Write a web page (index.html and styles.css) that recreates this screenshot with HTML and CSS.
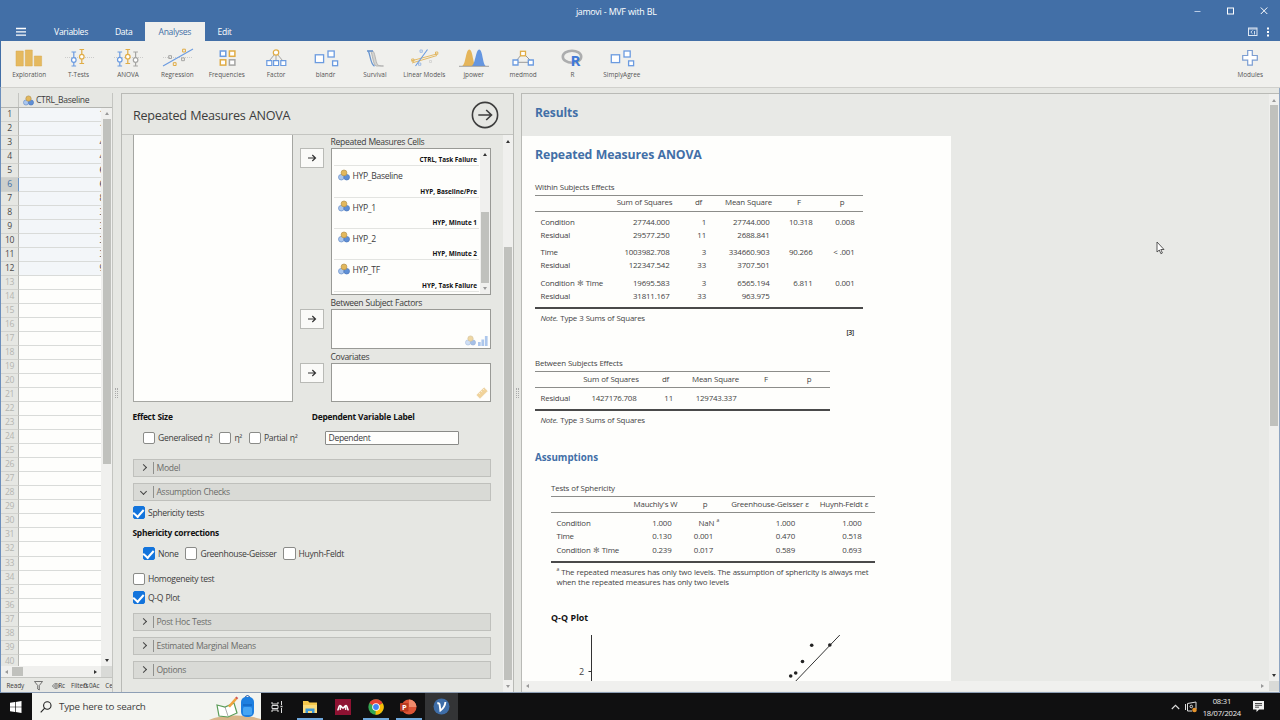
FILE: index.html
```html
<!DOCTYPE html>
<html lang="en">
  <head>
    <meta charset="UTF-8" />
    <meta name="viewport" content="width=device-width, initial-scale=1.0" />
    <title>jamovi - MVF with BL</title>
    <link rel="stylesheet" href="styles.css">
  </head>
  <body>
    <!-- shared icons -->
    <svg class="defs" width="0" height="0">
      <symbol id="nominal" viewBox="0 0 12 12">
        <circle cx="3.3" cy="8.2" r="2.8" fill="#a9c6ee" stroke="#6a8fc8" stroke-width=".7" />
        <circle cx="8.7" cy="8.2" r="2.8" fill="#5f8fd6" stroke="#4d79ba" stroke-width=".7" />
        <circle cx="6" cy="3.9" r="2.9" fill="#e3b85c" stroke="#b3924f" stroke-width=".7" />
      </symbol>
      <symbol id="arrow" viewBox="0 0 10 10">
        <path d="M1 5h7.5M5.3 2l3.2 3-3.2 3" fill="none" stroke="#333" stroke-width="1.2" />
      </symbol>
      <symbol id="squares" viewBox="0 0 34 22">
        <g fill="#fff" stroke="#6b9be0" stroke-width="1.3">
          <rect x="6.3" y="7.8" width="8.3" height="7.8" />
          <rect x="19" y="4" width="6.2" height="6" />
          <rect x="23.6" y="13.9" width="5" height="4.8" />
        </g>
      </symbol>
    </svg>

    <header class="titlebar">
      <div class="caption">
        <span>jamovi - MVF with BL</span>
        <svg class="win-buttons" width="90" height="22" fill="none" stroke="#fff">
          <path d="M14.5 11.5h6" stroke="#b9cbe4" />
          <rect x="47.5" y="8" width="6" height="6" />
          <path d="M80.8 7.5l6.5 6.5M87.3 7.5l-6.5 6.5" />
        </svg>
      </div>
      <nav class="tabs">
        <svg class="burger" width="10" height="10"><path d="M0 1.5h10M0 4.8h10M0 8.1h10" stroke="#fff" stroke-width="1.3" /></svg>
        <a class="tab tab-variables">Variables</a>
        <a class="tab tab-data">Data</a>
        <a class="tab tab-analyses active">Analyses</a>
        <a class="tab tab-edit">Edit</a>
        <svg class="tab-tools" width="26" height="12" fill="none" stroke="#dfe8f4">
          <rect x="1.5" y="2" width="8.5" height="7.5" />
          <path d="M1.5 3h8.5M5.5 4.5l-1.7 1.6 1.7 1.6M7.5 5v3.5" stroke-width=".9" />
          <path d="M21 1.5v9.5" stroke="#fff" stroke-width="2" stroke-dasharray="2 1.5" />
        </svg>
      </nav>
    </header>

    <div class="ribbon">
      <div class="tool">
        <svg viewBox="0 0 34 22"><path d="M4 4h7.3v15H4zM13.3 3h7v16h-7zM22.3 9h7.3v10h-7.3z" fill="#e5b95f" stroke="#d8a84c" stroke-width=".5" /></svg>
        <span>Exploration</span>
      </div>
      <div class="tool">
        <svg viewBox="0 0 34 22" fill="none">
          <path d="M3 10.5h29" stroke="#bbb" stroke-dasharray="1 1" stroke-width=".7" />
          <g stroke="#6b9be0" stroke-width="1.2"><path d="M11.8 5v14M9.5 5h4.6M9.5 19h4.6" /><circle cx="11.8" cy="13" r="2.3" fill="#fff" /></g>
          <g stroke="#e0ac45" stroke-width="1.2"><path d="M19.8 2.5v14M17.5 2.5h4.6M17.5 16.5h4.6" /><circle cx="19.8" cy="9.7" r="2.3" fill="#fff" /></g>
        </svg>
        <span>T-Tests</span>
      </div>
      <div class="tool">
        <svg viewBox="0 0 34 22" fill="none">
          <path d="M3 10.5h30" stroke="#bbb" stroke-dasharray="1 1" stroke-width=".7" />
          <g stroke="#6b9be0" stroke-width="1.2"><path d="M8.8 5v14M6.5 5h4.6M6.5 19h4.6" /><circle cx="8.8" cy="12.7" r="2.3" fill="#fff" /></g>
          <g stroke="#e0ac45" stroke-width="1.2"><path d="M16.8 2.5v14M14.5 2.5h4.6M14.5 16.5h4.6" /><circle cx="16.8" cy="9.7" r="2.3" fill="#fff" /></g>
          <g stroke="#a5a5a3" stroke-width="1.2"><path d="M24.6 5v14M22.3 5h4.6M22.3 19h4.6" /><circle cx="24.6" cy="13" r="2.3" fill="#fff" /></g>
        </svg>
        <span>ANOVA</span>
      </div>
      <div class="tool">
        <svg viewBox="0 0 34 22" fill="none">
          <path d="M3 10.5h30" stroke="#bbb" stroke-dasharray="1 1" stroke-width=".7" />
          <path d="M3 19L33 2" stroke="#6b9be0" stroke-width="1.1" />
          <path d="M8.7 8.7h2.8v2.8H8.7zM21.6 10.9h2.8v2.8h-2.8z" stroke="#a5a5a3" />
          <path d="M13.3 15.7h2.8v2.8h-2.8zM22.6 2.2h2.8V5h-2.8z" stroke="#e0ac45" />
        </svg>
        <span>Regression</span>
      </div>
      <div class="tool">
        <svg viewBox="0 0 34 22" fill="#fff" stroke-width="1.5">
          <rect x="10.3" y="4" width="5.5" height="5.3" stroke="#6b9be0" />
          <rect x="19.4" y="4" width="5.5" height="5.3" stroke="#e0ac45" />
          <rect x="10.3" y="12.8" width="5.5" height="5.3" stroke="#e0ac45" />
          <rect x="19.4" y="12.8" width="5.5" height="5.3" stroke="#a5a5a3" />
        </svg>
        <span>Frequencies</span>
      </div>
      <div class="tool">
        <svg viewBox="0 0 34 22" fill="#fff">
          <path d="M15.5 7.5l-5 6M17 8v6M18.5 7.5l5 6" stroke="#a5a5a3" />
          <circle cx="17" cy="5.5" r="2.7" stroke="#e0ac45" stroke-width="1.2" />
          <path d="M7.8 13.7h5v4.8h-5zM14.6 13.7h5v4.8h-5zM21.8 13.7h5v4.8h-5z" stroke="#6b9be0" stroke-width="1.2" />
        </svg>
        <span>Factor</span>
      </div>
      <div class="tool">
        <svg><use href="#squares" /></svg>
        <span>blandr</span>
      </div>
      <div class="tool">
        <svg viewBox="0 0 34 22" fill="none">
          <path d="M9.5 4h5c2.5 0 3 11 5 13.5 1 1.2 3 1.5 6 1.5h-7c-3.5 0-4-13-6-15" fill="#d3d3d0" stroke="#aaa" stroke-width=".8" />
          <path d="M9 4h6M10.5 4.5c1.5 2 2 13.5 6 14.5" stroke="#6794cf" stroke-width="1.3" />
        </svg>
        <span>Survival</span>
      </div>
      <div class="tool">
        <svg viewBox="0 0 34 22" fill="none">
          <path d="M5 13.7l25-6.8M5 16l25-7.5" stroke="#e0ac45" stroke-width=".8" />
          <path d="M20.5 2.5l-12 16.5" stroke="#6b9be0" stroke-width="1.1" />
          <path d="M13 3h2.3v2.3H13zM11.5 16h2.3v2.3h-2.3z" stroke="#8db1e4" stroke-width=".8" />
          <path d="M4.7 12h2.3v2.3H4.7zM28.5 5h2.3v2.3h-2.3z" stroke="#e0ac45" stroke-width=".8" />
          <path d="M22.5 13.5h2v2h-2z" stroke="#ccc" stroke-width=".7" />
        </svg>
        <span>Linear Models</span>
      </div>
      <div class="tool">
        <svg viewBox="0 0 34 22">
          <path d="M5 19c4-1 3.5-16.5 7.3-16.5S15.8 18 19 19z" fill="#e5b55a" />
          <path d="M14.5 19c4-1 4-16.5 7.7-16.5S25.5 18 29 19z" fill="#6596e0" />
          <path d="M2 19.3h30" stroke="#8c8c8c" stroke-width=".8" />
        </svg>
        <span>jpower</span>
      </div>
      <div class="tool">
        <svg viewBox="0 0 34 22" fill="#fff">
          <path d="M15.5 7.5l-5 6M18.5 7.5l6 6M10 15.3h14" stroke="#999" />
          <rect x="14.5" y="4.3" width="5" height="4.5" stroke="#e0ac45" stroke-width="1.3" />
          <path d="M7 13h5v5H7zM22.3 13h5v5h-5z" stroke="#6b9be0" stroke-width="1.3" />
        </svg>
        <span>medmod</span>
      </div>
      <div class="tool">
        <svg viewBox="0 0 34 22">
          <ellipse cx="17" cy="9.7" rx="9.2" ry="6" fill="none" stroke="#acadae" stroke-width="2.6" />
          <text x="15.5" y="19" class="r-letter">R</text>
        </svg>
        <span>R</span>
      </div>
      <div class="tool">
        <svg><use href="#squares" /></svg>
        <span>SimplyAgree</span>
      </div>
      <div class="tool modules">
        <svg viewBox="0 0 34 22"><path d="M14.7 3.5h4.6v5h5v4.6h-5v5h-4.6v-5h-5V8.5h5z" fill="#fff" stroke="#7b9dd2" stroke-width="1.2" /></svg>
        <span>Modules</span>
      </div>
    </div>

    <main class="workspace">
      <section class="data-view">
        <div class="column-head">
          <svg class="var-icon"><use href="#nominal" /></svg>
          <span>CTRL_Baseline</span>
        </div>
        <div class="grid-area">
          <div class="grid" id="grid"></div>
          <div class="vscroll">
            <i class="up"></i><b class="thumb"></b><i class="down dark"></i>
          </div>
        </div>
        <div class="hscroll">
          <i class="left"></i><b class="thumb"></b><i class="right dark"></i><span class="corner"></span>
        </div>
        <div class="status">
          <span class="ready">Ready</span>
          <svg class="funnel" width="9" height="10"><path d="M.5.5h8L5.3 4.5V9l-1.6-1V4.5z" fill="none" stroke="#555" stroke-width=".8" /></svg>
          <svg class="eye" width="8" height="8" fill="none" stroke="#666" stroke-width=".8"><path d="M.5 4c2-3.3 5-3.3 7 0-2 3.3-5 3.3-7 0z" /><circle cx="4" cy="4" r="1.3" /></svg>
          <span class="s-rows">Rc</span>
          <span class="s-filters">Filters</span><span class="s-added">0 0Ac</span><span class="s-cells">Ce</span>
        </div>
      </section>

      <div class="splitter"><i></i></div>

      <section class="options">
        <div class="options-head">
          <h2>Repeated Measures ANOVA</h2>
          <svg class="hide-btn" width="28" height="28" fill="none" stroke="#3d3d3d" stroke-width="1.6">
            <circle cx="14" cy="14" r="12.6" /><path d="M7.3 14h13M15.2 9l5.3 5-5.3 5" />
          </svg>
        </div>
        <div class="options-main">
          <div class="options-body">
            <div class="var-select">
              <div class="supplier"></div>
              <div class="buttons">
                <button class="move"><svg><use href="#arrow" /></svg></button>
                <button class="move"><svg><use href="#arrow" /></svg></button>
                <button class="move"><svg><use href="#arrow" /></svg></button>
              </div>
              <div class="targets">
                <label>Repeated Measures Cells</label>
                <div class="target cells">
                  <div class="cell-list">
                    <div class="cell first"><em>CTRL, Task Failure</em></div>
                    <div class="cell"><span><svg class="var-icon"><use href="#nominal" /></svg>HYP_Baseline</span><em>HYP, Baseline/Pre</em></div>
                    <div class="cell"><span><svg class="var-icon"><use href="#nominal" /></svg>HYP_1</span><em>HYP, Minute 1</em></div>
                    <div class="cell"><span><svg class="var-icon"><use href="#nominal" /></svg>HYP_2</span><em>HYP, Minute 2</em></div>
                    <div class="cell"><span><svg class="var-icon"><use href="#nominal" /></svg>HYP_TF</span><em>HYP, Task Failure</em></div>
                  </div>
                  <div class="vscroll"><i class="up dark"></i><b class="thumb"></b><i class="down"></i></div>
                </div>
                <label>Between Subject Factors</label>
                <div class="target small">
                  <svg class="var-icon"><use href="#nominal" /></svg>
                  <svg class="ordinal" width="10" height="10"><path d="M0 6h2.7v4H0zM3.4 3.5h2.7V10H3.4zM6.9 0h2.7v10H6.9z" fill="#6b9be0" /></svg>
                </div>
                <label>Covariates</label>
                <div class="target small">
                  <svg width="12" height="12"><path d="M.8 8L8 .8 11.3 4 4 11.3z" fill="#e8b04a" stroke="#d5a548" stroke-width=".6" /><path d="M3 6l1.2 1.2M5 4l1.2 1.2M7 2l1.2 1.2" stroke="#fff" stroke-width=".6" /></svg>
                </div>
              </div>
            </div>

            <div class="two-cols">
              <h4>Effect Size</h4>
              <h4>Dependent Variable Label</h4>
            </div>
            <div class="effect-row">
              <span class="check"><i></i>Generalised η²</span>
              <span class="check"><i></i>η²</span>
              <span class="check"><i></i>Partial η²</span>
              <span class="text-input">Dependent</span>
            </div>

            <div class="collapse"><b class="chev"></b><span>Model</span></div>
            <div class="collapse open"><b class="chev"></b><span>Assumption Checks</span></div>
            <div class="check-row"><span class="check on"><i></i>Sphericity tests</span></div>
            <h4 class="corrections">Sphericity corrections</h4>
            <div class="check-row indent">
              <span class="check on"><i></i>None</span>
              <span class="check"><i></i>Greenhouse-Geisser</span>
              <span class="check"><i></i>Huynh-Feldt</span>
            </div>
            <div class="check-row homogeneity"><span class="check"><i></i>Homogeneity test</span></div>
            <div class="check-row qq"><span class="check on"><i></i>Q-Q Plot</span></div>
            <div class="collapse"><b class="chev"></b><span>Post Hoc Tests</span></div>
            <div class="collapse"><b class="chev"></b><span>Estimated Marginal Means</span></div>
            <div class="collapse"><b class="chev"></b><span>Options</span></div>
          </div>
          <div class="vscroll"><i class="up dark"></i><b class="thumb"></b><i class="down"></i></div>
        </div>
      </section>

      <div class="splitter"><i></i></div>

      <section class="results">
        <div class="results-main">
          <div class="results-scroll">
            <h1>Results</h1>
            <article class="page">
              <h2>Repeated Measures ANOVA</h2>

              <table class="within">
                <caption>Within Subjects Effects</caption>
                <colgroup><col style="width:77px"><col style="width:65px"><col style="width:43px"><col style="width:57px"><col style="width:44px"><col style="width:42px"></colgroup>
                <thead><tr><th></th><th>Sum of Squares</th><th>df</th><th>Mean Square</th><th>F</th><th>p</th></tr></thead>
                <tbody>
                  <tr class="start"><td>Condition</td><td>27744.000</td><td>1</td><td>27744.000</td><td>10.318</td><td>0.008</td></tr>
                  <tr><td>Residual</td><td>29577.250</td><td>11</td><td>2688.841</td><td></td><td></td></tr>
                  <tr class="group"><td>Time</td><td>1003982.708</td><td>3</td><td>334660.903</td><td>90.266</td><td>&lt; .001</td></tr>
                  <tr><td>Residual</td><td>122347.542</td><td>33</td><td>3707.501</td><td></td><td></td></tr>
                  <tr class="group"><td>Condition <span class="by">✻</span> Time</td><td>19695.583</td><td>3</td><td>6565.194</td><td>6.811</td><td>0.001</td></tr>
                  <tr class="end"><td>Residual</td><td>31811.167</td><td>33</td><td>963.975</td><td></td><td></td></tr>
                </tbody>
              </table>
              <p class="note"><i>Note.</i> Type 3 Sums of Squares</p>
              <p class="ref">[3]</p>

              <table class="between">
                <caption>Between Subjects Effects</caption>
                <colgroup><col style="width:43px"><col style="width:66px"><col style="width:43px"><col style="width:57px"><col style="width:44px"><col style="width:42px"></colgroup>
                <thead><tr><th></th><th>Sum of Squares</th><th>df</th><th>Mean Square</th><th>F</th><th>p</th></tr></thead>
                <tbody>
                  <tr class="start end"><td>Residual</td><td>1427176.708</td><td>11</td><td>129743.337</td><td></td><td></td></tr>
                </tbody>
              </table>
              <p class="note"><i>Note.</i> Type 3 Sums of Squares</p>

              <h3>Assumptions</h3>

              <table class="sphericity">
                <caption>Tests of Sphericity</caption>
                <colgroup><col style="width:77px"><col style="width:55px"><col style="width:44px"><col style="width:86px"><col style="width:62px"></colgroup>
                <thead><tr><th></th><th>Mauchly's W</th><th>p</th><th>Greenhouse-Geisser ε</th><th>Huynh-Feldt ε</th></tr></thead>
                <tbody>
                  <tr class="start"><td>Condition</td><td>1.000</td><td class="nan">NaN <sup>a</sup></td><td>1.000</td><td>1.000</td></tr>
                  <tr><td>Time</td><td>0.130</td><td>0.001</td><td>0.470</td><td>0.518</td></tr>
                  <tr class="end"><td>Condition <span class="by">✻</span> Time</td><td>0.239</td><td>0.017</td><td>0.589</td><td>0.693</td></tr>
                </tbody>
              </table>
              <p class="footnote"><sup>a</sup> The repeated measures has only two levels. The assumption of sphericity is always met<br>when the repeated measures has only two levels</p>

              <h4>Q-Q Plot</h4>
              <svg class="plot" width="400" height="50" viewBox="13 0 400 50">
                <path d="M69.5 0v50M66.5 36.5h3" stroke="#333" />
                <text x="62" y="39.5">2</text>
                <path d="M317.8 0L270 50" stroke="#333" />
                <g fill="#222">
                  <circle cx="307.8" cy="10" r="1.8" /><circle cx="289.7" cy="10.3" r="1.8" />
                  <circle cx="280.5" cy="26.5" r="1.8" /><circle cx="273.7" cy="38" r="1.8" /><circle cx="268.7" cy="41" r="1.8" />
                </g>
              </svg>
            </article>
          </div>
          <div class="vscroll"><i class="up"></i><b class="thumb"></b><i class="down dark"></i></div>
        </div>
        <div class="hscroll"><i class="left"></i><i class="right"></i><span class="corner"></span></div>
      </section>
    </main>

    <footer class="taskbar">
      <div class="start-btn"><svg width="12" height="12" fill="#fff"><path d="M0 1.7l5-.7v4.7H0zM5.7.9l5.8-.8v5.6H5.7zM0 6.3h5V11l-5-.7zM5.7 6.3h5.8v5.6l-5.8-.8z" /></svg></div>
      <div class="search">
        <svg width="12" height="12" fill="none" stroke="#222" stroke-width="1.1"><circle cx="7.3" cy="4.5" r="3.7" /><path d="M4.7 7.2L.7 11.3" /></svg>
        <span>Type here to search</span>
        <svg class="doodle" width="54" height="26">
          <path d="M0 26c12-6 42-6 54 0z" fill="#d9b58a" />
          <path d="M8 11l8 2 9-4 3 10-9 4-9-1z" fill="#fff" stroke="#5a9c57" stroke-width="1.2" />
          <path d="M16 13l3 9" stroke="#888" stroke-width=".7" />
          <path d="M19 12l7-8 2 1.5-7 8z" fill="#f0a33c" /><path d="M26 4l1.3-1.5 2 1.5-1.3 1.5z" fill="#d3574e" />
          <path d="M36 5q0-3.5 2.5-3.5T41 5" fill="none" stroke="#1650a6" />
          <rect x="32" y="3" width="13" height="20" rx="5" fill="#1d7fe0" /><rect x="34" y="13" width="9" height="8" rx="1.5" fill="#46a5f4" /><path d="M34 11h9" stroke="#0d5ab5" />
        </svg>
      </div>
      <div class="task"><svg width="12" height="12" fill="none" stroke="#ddd"><path d="M1 1v2h6V1M1 11V9h6v2M1 4.5h6v3H1zM10.5 0v4M10.5 7v5" /><path d="M9.5 5.5h2" stroke-width="1.5" /></svg></div>
      <div class="task running"><svg width="16" height="14"><path d="M1 1h5l1.5 1.5H15V13H1z" fill="#f5c84c" /><path d="M1 5h14v8H1z" fill="#fbdc7b" /><path d="M3.5 13V8.5h9V13h-2.5v-2H6v2z" fill="#3f9ad8" /></svg></div>
      <div class="task"><svg width="16" height="16"><rect width="16" height="16" fill="#8e1232" /><path d="M2.500 11.300c1.300-.8.8-4.300 2.500-4.800 1.500 0 1.500 2.500 3 2.500s1.500-2.500 3-2.500c1.700.5 1.200 4 2.500 4.800" fill="none" stroke="#fff" stroke-width="1.600" /><path d="M5.300 7v4M10.700 7v4" stroke="#fff" stroke-width="1.200" /></svg></div>
      <div class="task running"><svg width="16" height="16"><circle cx="8" cy="8" r="7.7" fill="#33a852" /><path d="M8 8L1.3 4.2A7.7 7.7 0 0 1 14.7 4.2z" fill="#e94235" /><path d="M8 8l6.7-3.8A7.7 7.7 0 0 1 7.5 15.7z" fill="#fbbc05" /><circle cx="8" cy="8" r="3.8" fill="#fff" /><circle cx="8" cy="8" r="2.9" fill="#4285f4" /></svg></div>
      <div class="task running"><svg width="17" height="16"><circle cx="9" cy="8" r="7.5" fill="#dc5436" /><path d="M9 .5A7.5 7.5 0 0 1 16.5 8H9z" fill="#f08b6c" /><rect y="4" width="8.5" height="8.5" rx=".8" fill="#b93a20" /><text x="2" y="11" class="pp">P</text></svg></div>
      <div class="task active"><svg width="17" height="17"><circle cx="8.5" cy="8.5" r="8" fill="#3e6da8" /><path d="M4.3 5.5q2-.8 2.3 1l.8 6q4.5-3 5-8.5" fill="none" stroke="#fff" stroke-width="1.9" /></svg></div>
      <div class="tray">
        <svg width="9" height="6"><path d="M.8 5l3.700-3.700L8.200 5" fill="none" stroke="#ddd" stroke-width="1.1" /></svg>
        <svg class="meet" width="13" height="12" fill="none" stroke="#ddd"><path d="M2.5 2.5L11 1v7M2.5 2.5v7.5H7M.5 3v6" /><circle cx="6.3" cy="5.5" r="1.3" /><circle cx="9.5" cy="9" r="2.3" fill="#e8952c" stroke="none" /></svg>
        <div class="clock">08:31<br>18/07/2024</div>
        <svg width="13" height="13"><path d="M1 1h11v8.5H7L4.5 12V9.5H1z" fill="#f0f0f0" /><path d="M3 3.5h7M3 5.3h7M3 7.2h4" stroke="#222" stroke-width=".8" /></svg>
      </div>
    </footer>

    <svg class="cursor" width="9" height="14"><path d="M1 1v10l2.3-2 1.6 3.7 1.5-.7-1.6-3.5H8z" fill="#fff" stroke="#333" stroke-width=".8" /></svg>

    <script>
      // 12 filled rows, the rest are empty
      const digits = ["1", "1", "4", "4", "6", "6", "8", "3", "3", "3", "3", "9"];
      const grid = document.getElementById('grid');
      for (let i = 1; i <= 40; i++) {
        const row = document.createElement('div');
        row.className = 'row' + (i <= 12 ? ' filled' : '') + (i === 6 ? ' selected' : '');
        row.innerHTML = `<span class="num">${i}</span><span class="value"></span>`;
        if (i <= 12) row.lastChild.innerHTML = `<u>${digits[i - 1]}</u>`;
        grid.appendChild(row);
      }
    </script>
  </body>
</html>
```

FILE: styles.css
```css
* {
  box-sizing: border-box;
}
body {
  margin: 0;
  width: 1280px;
  height: 720px;
  overflow: hidden;
  display: flex;
  flex-direction: column;
  font-family: "Open Sans", "Noto Sans", sans-serif;
  font-size: 8.6px;
  letter-spacing: -.32px;
  word-spacing: .4px;
  line-height: 12px;
  color: #3c3c3c;
  background-color: #e6e7e3;
}
h1, h2, h3, h4, p {
  margin: 0;
}
svg {
  display: block;
  flex: none;
}
.defs {
  position: absolute;
}

/* title bar */
.titlebar {
  height: 41px;
  flex: none;
  background-color: #426fa7;
  color: #fff;
}
.caption {
  height: 22px;
  display: flex;
  justify-content: flex-end;
  align-items: center;
}
.caption span {
  font-size: 8.9px;
  margin-right: 523.5px;
  white-space: nowrap;
  padding-top: 1px;
}
.win-buttons {
  margin-right: 10px;
}
.tabs {
  display: flex;
  height: 19px;
  align-items: center;
}
.burger {
  margin: 0 14px 0 15.5px;
}
.tab {
  height: 19px;
  line-height: 20px;
  text-align: center;
}
.tab-variables {
  width: 63px;
}
.tab-data {
  width: 42.5px;
}
.tab-analyses {
  width: 59.5px;
}
.tab-edit {
  width: 40px;
}
.tab.active {
  background-color: #f0f0ed;
  color: #426fa7;
}
.tab-tools {
  margin-left: auto;
  margin-right: 7px;
}

/* ribbon */
.ribbon {
  height: 47px;
  flex: none;
  display: flex;
  padding-left: 3.5px;
  background-color: #f0f0ed;
  border-bottom: 1px solid #d0d0cc;
  border-left: 1px solid #426fa7;
}
.tool {
  width: 49.4px;
  padding-top: 6px;
  display: flex;
  flex-direction: column;
  align-items: center;
  font-size: 6.4px;
  letter-spacing: 0;
  word-spacing: 0;
  line-height: 11px;
  white-space: nowrap;
  color: #555;
}
.tool svg {
  width: 34px;
  height: 22px;
}
.modules {
  margin-left: auto;
  margin-right: 5px;
}
.r-letter {
  font: bold 15px "Open Sans", sans-serif;
  fill: #3f79d8;
}

/* scroll bars */
.vscroll {
  display: flex;
  flex-direction: column;
  align-items: center;
  background-color: #f0f0ee;
  flex: none;
}
.thumb {
  background-color: #c0c1bd;
}
.up, .down, .left, .right {
  border: 2.5px solid transparent;
  flex: none;
  width: 0;
  height: 0;
}
.up {
  border-top: 0;
  border-bottom: 3px solid #999;
}
.down {
  border-bottom: 0;
  border-top: 3px solid #999;
  margin-top: auto;
}
.left {
  border-left: 0;
  border-right: 3px solid #999;
}
.right {
  border-right: 0;
  border-left: 3px solid #999;
  margin-left: auto;
}
.up.dark {
  border-bottom-color: #333;
}
.down.dark {
  border-top-color: #333;
}
.right.dark {
  border-left-color: #333;
}
.hscroll {
  display: flex;
  align-items: center;
  background-color: #f0f0ee;
  flex: none;
}
.corner {
  height: 100%;
  background-color: #d9dad7;
}

.workspace {
  height: 605px;
  flex: none;
  display: flex;
  padding-top: 5px;
  border-left: 1px solid #6c8fbc;
  border-bottom: 1px solid #8e9fb5;
  border-right: 1px solid #8fa5c2;
}

/* spreadsheet */
.data-view {
  width: 112px;
  flex: none;
  display: flex;
  flex-direction: column;
  border-right: 1px solid #c4c5c1;
}
.column-head {
  height: 14px;
  margin-left: 17px;
  padding-left: 4px;
  border-left: 1px solid #c4c5c1;
  display: flex;
  align-items: center;
  gap: 2px;
}
.var-icon {
  width: 11px;
  height: 11px;
}
.grid-area {
  display: flex;
  height: 559px;
  border-top: 1px solid #b5b6b2;
}
.grid {
  width: 100px;
  overflow: hidden;
}
.row {
  display: flex;
  height: 14.03px;
}
.num {
  width: 18px;
  flex: none;
  text-align: center;
  line-height: 13px;
  color: #b4b5b1;
  border-right: 1px solid #b5b6b2;
  border-bottom: 1px solid #d2d3cf;
}
.value {
  flex: 1;
  background-color: #fefefc;
  border-bottom: 1px solid #d9dbd9;
  overflow: hidden;
}
.value u {
  float: right;
  margin-right: -3px;
  text-decoration: none;
}
.filled .num {
  color: #4a4a4a;
}
.filled .value {
  background-color: #f3f6f9;
}
.selected .num {
  background-color: #cdcfcc;
  color: #426fa7;
  border-right: 1.5px solid #6c93c4;
}
.data-view .vscroll {
  width: 11px;
  padding: 4px 0 4px;
}
.data-view .vscroll .thumb {
  width: 8px;
  height: 345px;
  margin-top: 4px;
}
.data-view .hscroll {
  height: 11px;
  padding-left: 4px;
}
.data-view .hscroll .thumb {
  width: 11px;
  height: 9px;
  margin-left: 4px;
}
.data-view .corner {
  width: 11px;
  margin-left: 4px;
}
.status {
  flex: 1;
  border-top: 1px solid #c4c5c1;
  display: flex;
  align-items: center;
  font-size: 6.4px;
  letter-spacing: -.1px;
  padding: 1px 0 0 5.5px;
  white-space: nowrap;
  overflow: hidden;
}
.funnel {
  margin-left: 10px;
}
.eye {
  margin-left: 9px;
}
.s-rows {
  margin-left: -2px;
}
.s-filters {
  margin-left: 6px;
}
.s-added {
  margin-left: -5px;
}
.s-cells {
  margin-left: 6px;
}

.splitter {
  width: 7.5px;
  flex: none;
  display: flex;
  align-items: center;
  justify-content: center;
}
.splitter i {
  width: 3px;
  height: 10px;
  border-left: 1px dotted #aaa;
  border-right: 1px dotted #aaa;
}

/* analysis options */
.options {
  width: 393px;
  flex: none;
  border: 1px solid #b9bab6;
  border-bottom: 0;
}
.options-head {
  height: 41px;
  display: flex;
  align-items: center;
  justify-content: space-between;
  padding: 1px 13.5px 0 11.5px;
  border-bottom: 1px solid #c4c5c1;
}
.options-head h2 {
  font-size: 12.6px;
  font-weight: 400;
  letter-spacing: -.26px;
  line-height: 18px;
  padding-top: 2px;
}
.options-main {
  display: flex;
  height: 557px;
}
.options-body {
  width: 381px;
  padding: 0 11.5px 0 11px;
}
.options-main > .vscroll {
  width: 10px;
  padding: 5px 0 4px;
}
.options-main > .vscroll .thumb {
  width: 8px;
  height: 433px;
  margin-top: 104px;
}
.var-select {
  display: flex;
  height: 267px;
}
.supplier {
  width: 161px;
  background-color: #fefefc;
  border: 1px solid #a5a6a2;
  border-top: 0;
}
.buttons {
  width: 24px;
  margin-left: 6.5px;
  padding-top: 13px;
}
.move {
  display: flex;
  align-items: center;
  justify-content: center;
  width: 24px;
  height: 20px;
  padding: 0;
  background-color: #fafaf8;
  border: 1px solid #b9bab6;
}
.move svg {
  width: 10px;
  height: 10px;
}
.move:nth-child(2) {
  margin-top: 141px;
}
.move:nth-child(3) {
  margin-top: 33.5px;
}
.targets {
  width: 161px;
  margin-left: 7px;
}
.targets label {
  display: block;
  height: 14px;
  line-height: 16px;
}
.targets label:first-child {
  height: 13.4px;
  line-height: 15px;
}
.target {
  background-color: #fefefc;
  border: 1px solid #999a96;
}
.cells {
  height: 147px;
  display: flex;
}
.cell-list {
  flex: 1;
  padding: 0 1px 0 2px;
  overflow: hidden;
}
.cell {
  height: 31.3px;
  border-bottom: 1px solid #e3e4e1;
  display: flex;
  flex-direction: column;
  justify-content: space-between;
}
.cell.first {
  height: 17px;
  justify-content: flex-end;
}
.cell span {
  display: flex;
  align-items: center;
  gap: 2.5px;
  padding: 4px 0 0 4.5px;
}
.cell .var-icon {
  width: 12px;
  height: 12px;
  margin-top: -3px;
}
.cell em {
  font-style: normal;
  font-weight: 700;
  font-size: 6.4px;
  letter-spacing: 0;
  word-spacing: 0;
  text-align: right;
  color: #111;
  padding-right: 2px;
  line-height: 11px;
}
.cells .vscroll {
  width: 10px;
  padding: 4px 0;
}
.cells .thumb {
  width: 8px;
  height: 71px;
  margin-top: 56px;
}
.target.small {
  height: 39.4px;
  display: flex;
  justify-content: flex-end;
  align-items: flex-end;
  gap: 2px;
  padding: 2px;
}
.target.small svg {
  opacity: .55;
}
h4 {
  font-size: 8.4px;
  font-weight: 700;
  letter-spacing: -.25px;
  color: #111;
}
.two-cols {
  display: flex;
  margin-top: 9px;
}
.two-cols h4 {
  width: 179.5px;
}
.effect-row {
  display: flex;
  align-items: center;
  height: 14px;
  margin: 8px 0 14px;
  padding-left: 10px;
}
.check {
  display: flex;
  align-items: center;
  gap: 3px;
  white-space: nowrap;
  margin-right: 6.5px;
}
.check i {
  width: 12.5px;
  height: 12.5px;
  background-color: #fff;
  border: 1px solid #8a8b88;
  border-radius: 2px;
}
.check.on i {
  background-color: #1374dc;
  border-color: #1374dc;
  display: flex;
  justify-content: center;
}
.check.on i::after {
  content: "";
  width: 4.8px;
  height: 8px;
  border: solid #fff;
  border-width: 0 2px 2px 0;
  transform: rotate(42deg);
}
.text-input {
  width: 134px;
  height: 14px;
  margin-left: auto;
  margin-right: 32.5px;
  padding-left: 3px;
  background-color: #fefefc;
  border: 1px solid #8a8b88;
  border-radius: 1px;
}
.collapse {
  display: flex;
  align-items: center;
  height: 17.5px;
  margin-bottom: 6.5px;
  padding-left: 7px;
  background-color: #d9dad6;
  border: 1px solid #bfc0bc;
  color: #6b6c69;
}
.collapse span {
  border-left: 1px solid #8f908d;
  margin-left: 7px;
  padding-left: 3px;
}
.chev {
  width: 5px;
  height: 5px;
  border: solid #444;
  border-width: 1.5px 1.5px 0 0;
  transform: rotate(45deg);
}
.open .chev {
  transform: rotate(135deg);
}
.check-row {
  display: flex;
  height: 13px;
}
.open + .check-row {
  margin-top: -1px;
}
.indent {
  padding-left: 10px;
  margin-top: 8px;
}
.corrections {
  margin-top: 8px;
}
.homogeneity {
  margin-top: 12.5px;
}
.qq {
  margin: 5.5px 0 9px;
}

/* results */
.results {
  flex: 1;
  border-top: 1px solid #b9bab6;
  border-left: 1px solid #b9bab6;
  background-color: #e8e9e6;
}
.results-main {
  display: flex;
  height: 587px;
}
.results-scroll {
  flex: 1;
  overflow: hidden;
}
.results h1 {
  height: 42px;
  padding: 10px 0 0 13px;
  font-size: 12px;
  letter-spacing: -.1px;
  line-height: 18px;
  color: #426fa7;
}
.page {
  width: 429px;
  height: 560px;
  padding: 10px 0 0 13px;
  background-color: #fefefc;
  font-size: 7.9px;
  letter-spacing: -.19px;
  word-spacing: .3px;
  color: #444;
}
.page h2 {
  font-size: 12.3px;
  letter-spacing: -.12px;
  line-height: 18px;
  color: #426fa7;
  margin-bottom: 16.5px;
}
.page h3 {
  font-size: 9.75px;
  letter-spacing: 0;
  line-height: 14px;
  color: #426fa7;
  margin: 24.5px 0 17.5px;
}
table {
  table-layout: fixed;
  border-collapse: separate;
  border-spacing: 0;
  line-height: 13.3px;
}
.within {
  width: 328px;
}
.between {
  width: 295px;
}
.sphericity {
  width: 324px;
  margin-left: 16px;
}
caption {
  text-align: left;
  height: 14px;
}
th {
  padding: 0;
  height: 17px;
  font-weight: 400;
  white-space: nowrap;
  border-top: 1px solid #8c8d8a;
  border-bottom: 1px solid #8c8d8a;
}
td {
  padding: 0 7.5px 0 0;
  height: 13.3px;
  text-align: right;
  white-space: nowrap;
}
td:first-child {
  text-align: left;
  padding: 0 0 0 5.5px;
}
td:nth-child(3) {
  padding-right: 14px;
}
td:nth-child(5), td:nth-child(6) {
  padding-right: 8.5px;
}
.sphericity td:nth-child(2) {
  padding-right: 11.5px;
}
.sphericity td:nth-child(4) {
  padding-right: 18px;
}
.sphericity td:nth-child(5) {
  padding-right: 13.5px;
}
.sphericity td.nan {
  padding-right: 8px;
}
tr.start td {
  padding-top: 4px;
}
tr.group td {
  padding-top: 4px;
}
tr.end td {
  padding-bottom: 4px;
  border-bottom: 2px solid #4a4a4a;
}
.by {
  color: #777;
}
sup {
  font-size: 5px;
  line-height: 0;
}
.note {
  padding: 3px 0 0 5.5px;
}
.ref {
  width: 319px;
  text-align: right;
  font-size: 6.5px;
  font-weight: 700;
  margin: 3px 0 17.5px;
}
.footnote {
  padding: 4px 0 0 21.5px;
  line-height: 10.5px;
}
.page h4 {
  font-size: 8.9px;
  letter-spacing: 0;
  margin: 24px 0 11px 16px;
}
.plot text {
  font-size: 9px;
  text-anchor: end;
  fill: #444;
}
.results .vscroll {
  width: 10px;
  padding: 5px 0 4px;
}
.results .vscroll .thumb {
  width: 8px;
  height: 321px;
  margin-top: 3px;
}
.results .hscroll {
  height: 10px;
  padding-left: 4px;
}
.results .corner {
  width: 10px;
  margin-left: 5px;
}

/* taskbar */
.taskbar {
  height: 27px;
  display: flex;
  background-color: #101011;
}
.start-btn {
  width: 32px;
  display: flex;
  align-items: center;
  justify-content: center;
}
.search {
  width: 229px;
  display: flex;
  align-items: center;
  padding-left: 8px;
  background-color: #f3f4f0;
  font-size: 9.8px;
  letter-spacing: -.25px;
  overflow: hidden;
}
.search span {
  margin-left: 7px;
}
.doodle {
  margin-left: auto;
  margin-right: -2px;
  align-self: flex-end;
}
.task {
  width: 32.8px;
  display: flex;
  align-items: center;
  justify-content: center;
}
.running {
  background: linear-gradient(#6fa8dc, #6fa8dc) center bottom / 26px 2px no-repeat;
}
.active {
  background-color: #333436;
}
.pp {
  font-size: 7.5px;
  font-weight: 700;
  fill: #fff;
}
.tray {
  margin-left: auto;
  display: flex;
  align-items: center;
  padding-right: 15px;
}
.meet {
  margin-left: 5px;
}
.clock {
  margin: 0 11px 0 5px;
  font-size: 7.6px;
  letter-spacing: -.2px;
  color: #eee;
  text-align: center;
}
.cursor {
  position: absolute;
  left: 1156px;
  top: 241px;
}
```
